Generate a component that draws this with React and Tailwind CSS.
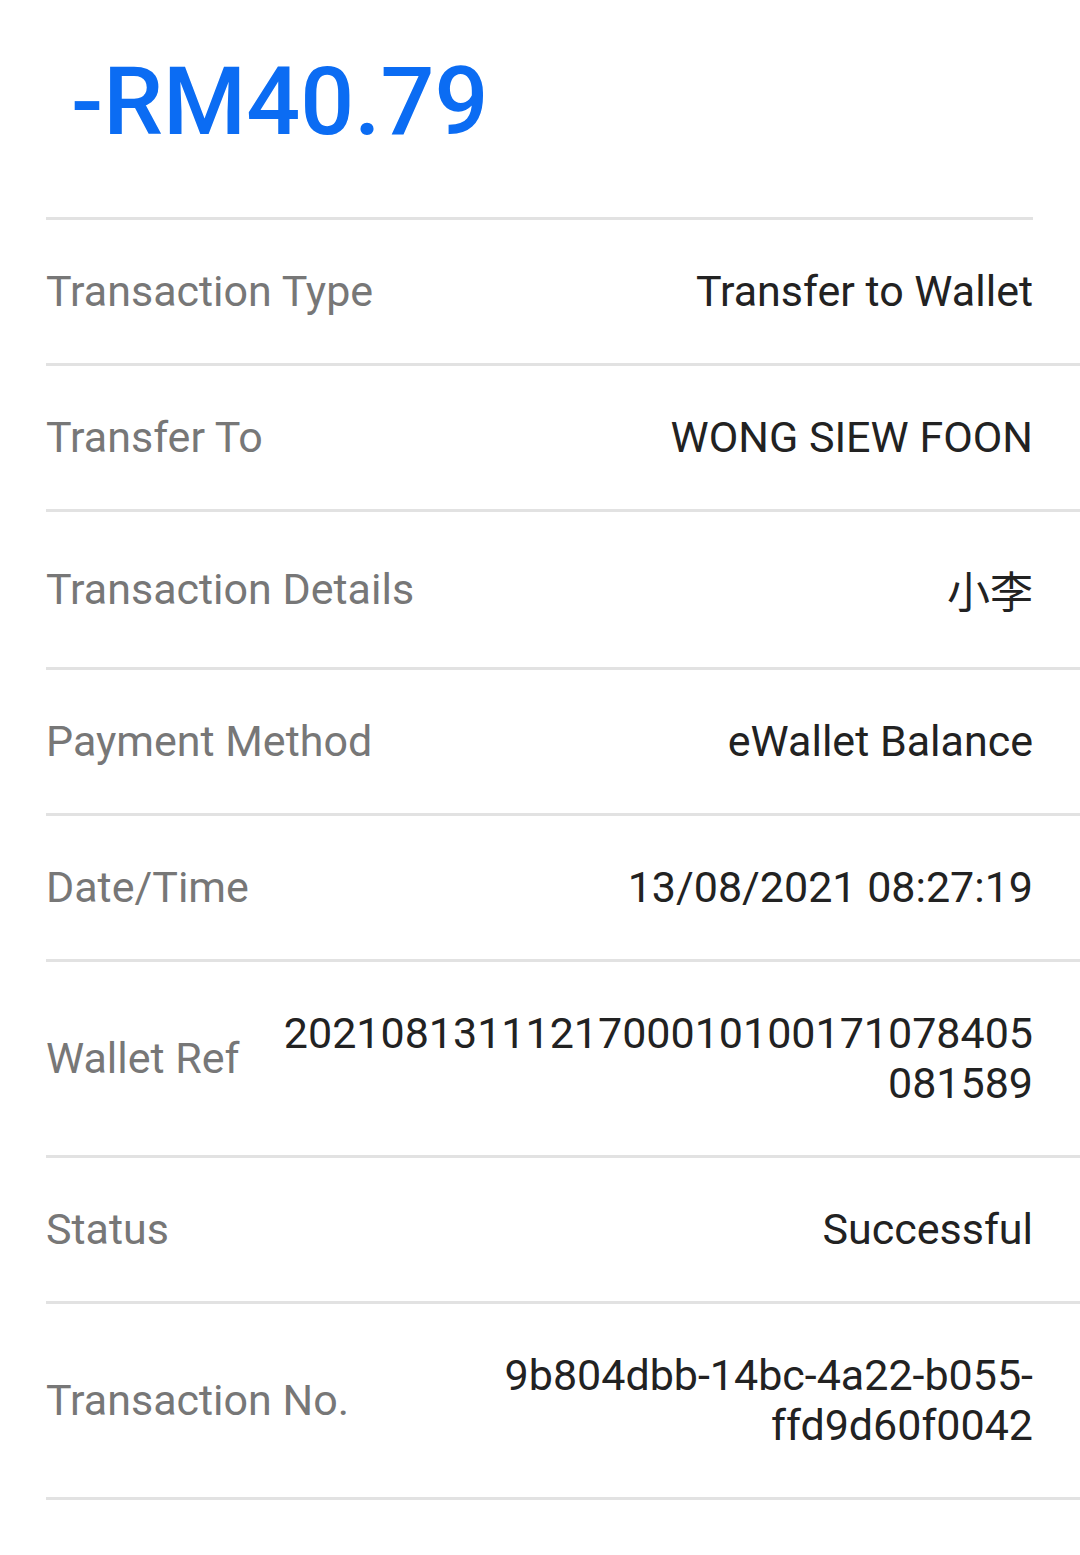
import React from "react";

const rows = [
  { label: "Transaction Type", value: "Transfer to Wallet" },
  { label: "Transfer To", value: "WONG SIEW FOON" },
  { label: "Transaction Details", value: "小李" },
  { label: "Payment Method", value: "eWallet Balance" },
  { label: "Date/Time", value: "13/08/2021 08:27:19" },
  { label: "Wallet Ref", value: "2021081311121700010100171078405081589" },
  { label: "Status", value: "Successful" },
  { label: "Transaction No.", value: "9b804dbb-14bc-4a22-b055-ffd9d60f0042" },
];

const DetailRow = ({ label, value }) => {
  return (
    <div className="ml-[46px] flex items-center gap-10 border-b-[3px] border-[#e2e2e2] pt-[46px] pb-[47px] pr-[47px]">
      <div className="shrink-0 text-[#777777]">{label}</div>
      <div className="min-w-0 flex-1 text-right text-[#222222] [overflow-wrap:anywhere]">{value}</div>
    </div>
  );
};

const App = () => {
  return (
    <div
      className="min-h-[1555px] w-full bg-white text-[43px] leading-[normal]"
      style={{ fontFamily: "Roboto, 'Noto Sans CJK SC', sans-serif" }}
    >
      <div className="pl-[71px] pt-[46px] pb-[60px]">
        <h1 className="text-[95px] font-medium leading-[normal] text-[#0b6cf3]">-RM40.79</h1>
      </div>
      <div className="ml-[46px] mr-[47px] h-[3px] bg-[#e2e2e2]" />
      {rows.map((row) => (
        <DetailRow key={row.label} label={row.label} value={row.value} />
      ))}
    </div>
  );
};

export default App;
